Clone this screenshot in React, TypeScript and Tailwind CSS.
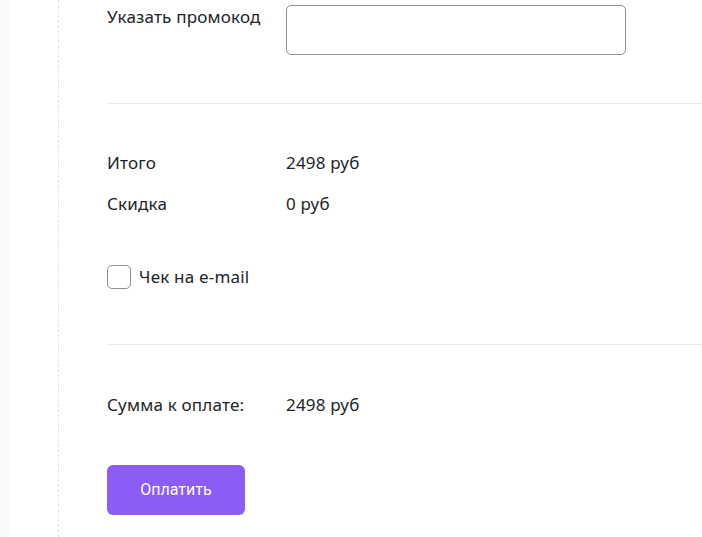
const rows = [
  { label: "Итого", value: "2498 руб" },
  { label: "Скидка", value: "0 руб" },
];

const App = () => {
  return (
    <div className="flex min-h-[537px] w-full bg-white text-[17px] leading-[24px] tracking-[0.2px] text-[#212529] font-['Noto_Sans',sans-serif]">
      <div className="w-[10px] shrink-0 bg-[#f8f9fb]" />
      <div className="w-[48px] shrink-0" />
      <div className="flex-1 border-l border-dashed border-[#dde3f5] pl-[48px] overflow-hidden">
        <div className="flex items-start pt-[5px]">
          <span className="w-[179px] shrink-0">Указать промокод</span>
          <input
            type="text"
            className="h-[50px] w-[340px] rounded-[5px] border border-[#8a9097] px-3 outline-none"
          />
        </div>

        <div className="mt-[48px] border-t border-[#e2e8f0]" />

        <div className="mt-[47px] flex flex-col gap-[17px]">
          {rows.map((row, i) => (
            <div key={i} className="flex">
              <span className="w-[179px] shrink-0">{row.label}</span>
              <span>{row.value}</span>
            </div>
          ))}
        </div>

        <label className="mt-[49px] flex items-center gap-2 cursor-pointer">
          <span className="h-6 w-6 rounded-[5px] border border-[#8a9097] bg-white" />
          <span>Чек на e-mail</span>
        </label>

        <div className="mt-[55px] border-t border-[#e2e8f0]" />

        <div className="mt-[48px] flex">
          <span className="w-[179px] shrink-0">Сумма к оплате:</span>
          <span>2498 руб</span>
        </div>

        <button className="mt-[48px] h-[50px] w-[138px] rounded-[6px] bg-[#8b5cf6] text-[16px] tracking-normal text-white font-['Roboto',sans-serif]">
          Оплатить
        </button>
      </div>
    </div>
  );
};

export default App;
